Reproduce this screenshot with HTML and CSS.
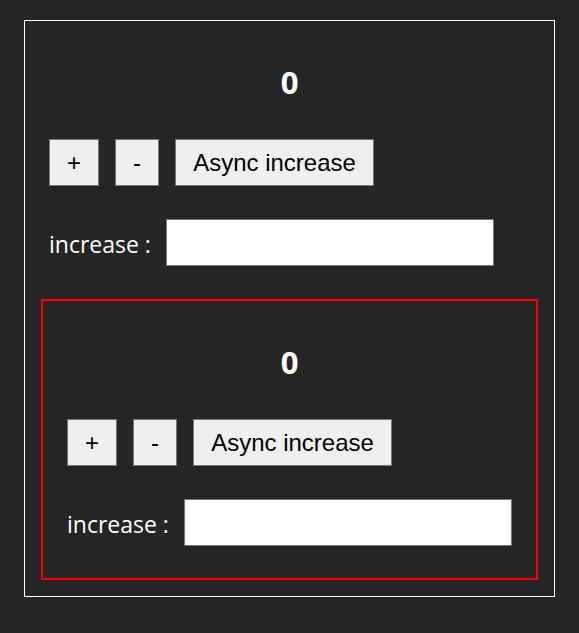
FILE: index.html
```html
<!DOCTYPE html>
<html>
<head>
<meta charset="utf-8">
<link rel="stylesheet" href="styles.css">
</head>
<body>
<div class="counter counter-outer">
  <h1 class="count">0</h1>
  <div class="btn-row">
    <button class="btn btn-plus">+</button>
    <button class="btn btn-minus">-</button>
    <button class="btn btn-async">Async increase</button>
  </div>
  <div class="input-row">
    <label class="label">increase :</label>
    <input class="field" type="text">
  </div>
  <div class="counter counter-inner">
    <h1 class="count">0</h1>
    <div class="btn-row">
      <button class="btn btn-plus">+</button>
      <button class="btn btn-minus">-</button>
      <button class="btn btn-async">Async increase</button>
    </div>
    <div class="input-row">
      <label class="label">increase :</label>
      <input class="field" type="text">
    </div>
  </div>
</div>
</body>
</html>
```
FILE: styles.css
```css
html, body {
  margin: 0;
  padding: 0;
  background: #252525;
}
body {
  padding: 20px 24px 36px 24px;
  font-family: "Open Sans", "Noto Sans", sans-serif;
  color: #ffffff;
}
.counter {
  padding: 16px;
  box-sizing: border-box;
}
.counter-outer {
  border: 1px solid #ffffff;
  width: 531px;
}
.counter-inner {
  border: 2px solid #ff0000;
  margin-top: 33px;
}
.count {
  margin: 0;
  height: 102px;
  padding-top: 27px;
  box-sizing: border-box;
  font-size: 31px;
  line-height: 36px;
  font-weight: 700;
  text-align: center;
}
.btn-row {
  display: flex;
  gap: 16px;
  padding-left: 8px;
  height: 47px;
}
.btn {
  font-family: "Liberation Sans", Arial, sans-serif;
  font-size: 24px;
  color: #000;
  background: #efefef;
  border: 1px solid #767676;
  border-radius: 0;
  padding: 0;
  height: 47px;
  margin: 0;
}
.btn-plus { width: 50px; }
.btn-minus { width: 44px; }
.btn-async { width: 199px; }
.input-row {
  display: flex;
  align-items: center;
  padding-left: 8px;
  margin-top: 33px;
  height: 47px;
  margin-bottom: 16px;
}
.label {
  font-size: 23px;
  width: 117px;
  flex: none;
  padding-top: 2px;
}
.field {
  width: 328px;
  height: 47px;
  box-sizing: border-box;
  border: 1px solid #767676;
  background: #fff;
  margin: 0;
  padding: 0;
}
```
